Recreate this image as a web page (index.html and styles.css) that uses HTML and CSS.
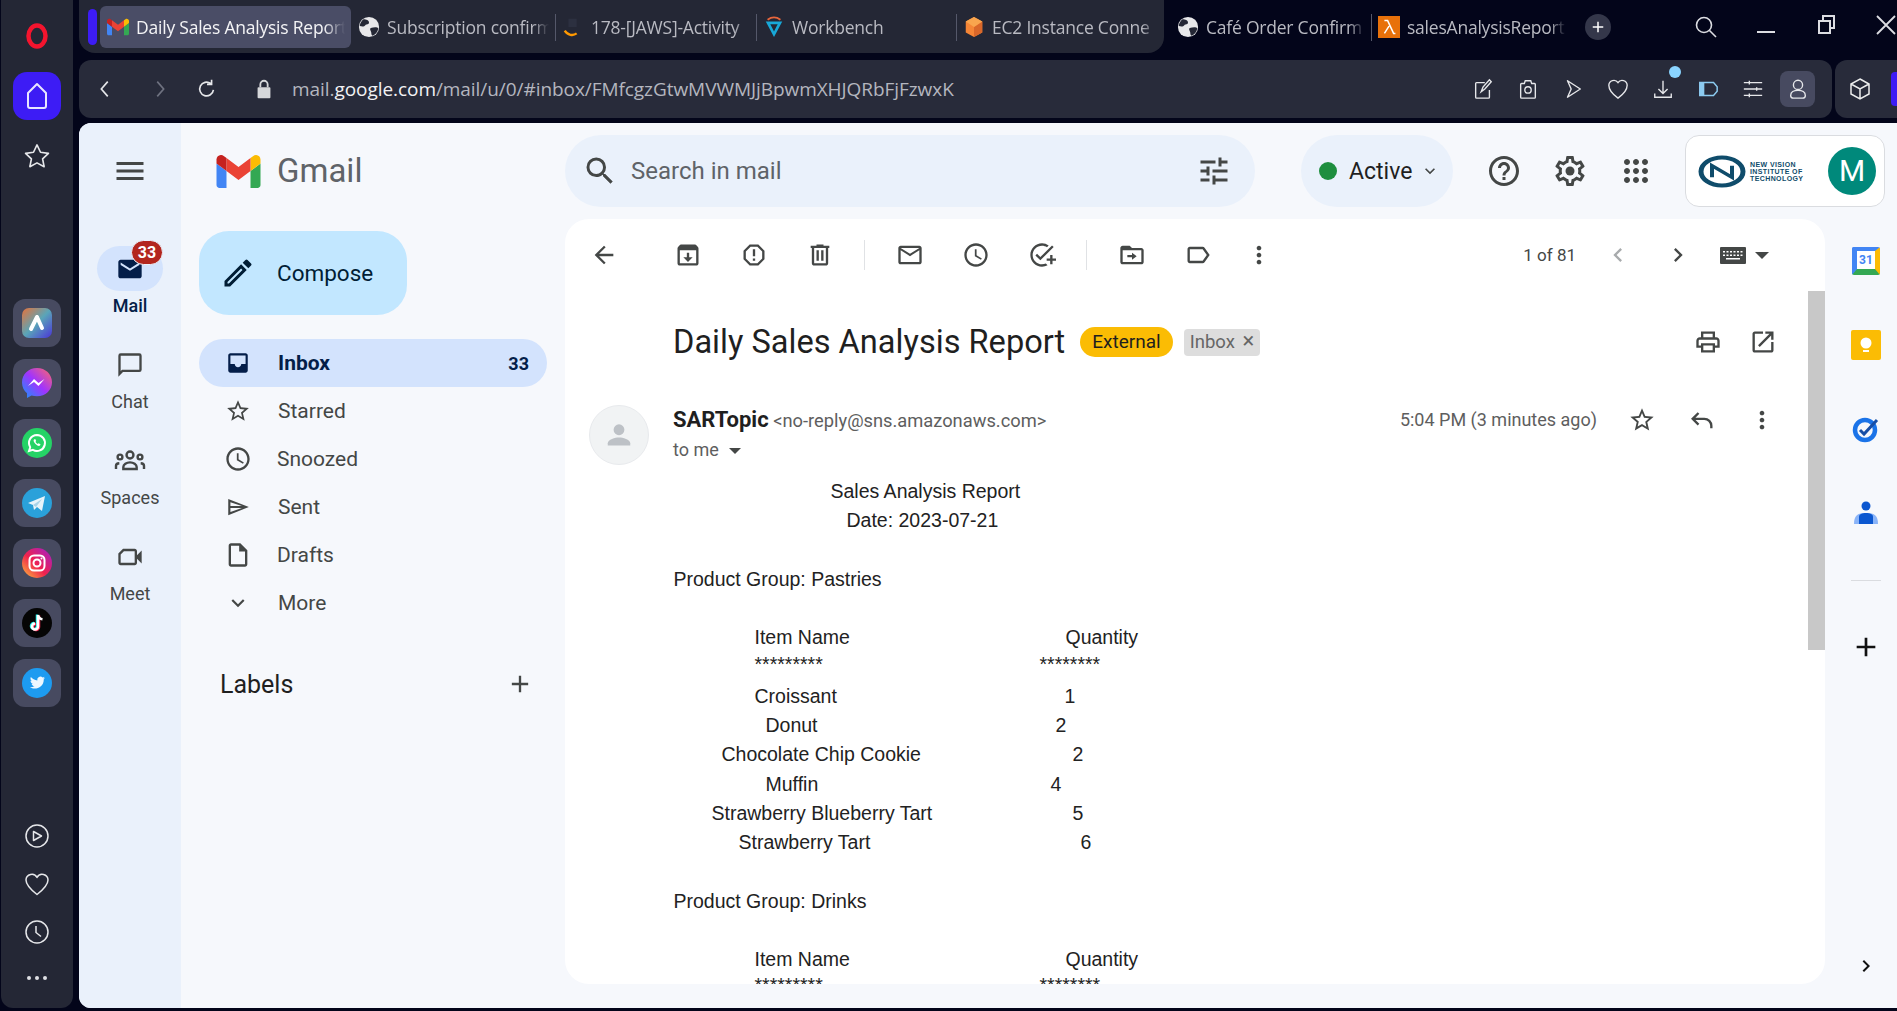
FILE: index.html
```html
<!DOCTYPE html>
<html lang="en">
<head>
    <meta charset="UTF-8">
    <title>Daily Sales Analysis Report - Gmail</title>
    <link rel="stylesheet" href="styles.css">
</head>
<body>
    <!-- icon sprite -->
    <svg class="sprite" xmlns="http://www.w3.org/2000/svg">
        <symbol id="i-menu" viewBox="0 0 24 24"><path d="M3 18h18v-2H3v2zm0-5h18v-2H3v2zm0-7v2h18V6H3z"/></symbol>
        <symbol id="i-search" viewBox="0 0 24 24"><path d="M15.5 14h-.79l-.28-.27A6.471 6.471 0 0 0 16 9.5 6.5 6.5 0 1 0 9.5 16c1.61 0 3.09-.59 4.23-1.57l.27.28v.79l5 4.99L20.49 19l-4.99-5zm-6 0C7.01 14 5 11.99 5 9.5S7.01 5 9.5 5 14 7.01 14 9.5 11.99 14 9.5 14z"/></symbol>
        <symbol id="i-tune" viewBox="0 0 24 24"><path d="M3 17v2h6v-2H3zM3 5v2h10V5H3zm10 16v-2h8v-2h-8v-2h-2v6h2zM7 9v2H3v2h4v2h2V9H7zm14 4v-2H11v2h10zm-6-4h2V7h4V5h-4V3h-2v6z"/></symbol>
        <symbol id="i-help" viewBox="0 0 24 24"><path d="M11 18h2v-2h-2v2zm1-16C6.48 2 2 6.48 2 12s4.48 10 10 10 10-4.48 10-10S17.52 2 12 2zm0 18c-4.41 0-8-3.59-8-8s3.59-8 8-8 8 3.59 8 8-3.59 8-8 8zm0-14c-2.21 0-4 1.79-4 4h2c0-1.1.9-2 2-2s2 .9 2 2c0 2-3 1.75-3 5h2c0-2.25 3-2.5 3-5 0-2.21-1.79-4-4-4z"/></symbol>
        <symbol id="i-gear" viewBox="0 0 24 24"><path d="M19.43 12.98c.04-.32.07-.64.07-.98 0-.34-.03-.66-.07-.98l2.11-1.65c.19-.15.24-.42.12-.64l-2-3.46c-.09-.16-.26-.25-.44-.25-.06 0-.12.01-.17.03l-2.49 1c-.52-.4-1.08-.73-1.69-.98l-.38-2.65C14.46 2.18 14.25 2 14 2h-4c-.25 0-.46.18-.49.42l-.38 2.65c-.61.25-1.17.59-1.69.98l-2.49-1c-.06-.02-.12-.03-.18-.03-.17 0-.34.09-.43.25l-2 3.46c-.13.22-.07.49.12.64l2.11 1.65c-.04.32-.07.65-.07.98 0 .33.03.66.07.98l-2.11 1.65c-.19.15-.24.42-.12.64l2 3.46c.09.16.26.25.44.25.06 0 .12-.01.17-.03l2.49-1c.52.4 1.08.73 1.69.98l.38 2.65c.03.24.24.42.49.42h4c.25 0 .46-.18.49-.42l.38-2.65c.61-.25 1.17-.59 1.69-.98l2.49 1c.06.02.12.03.18.03.17 0 .34-.09.43-.25l2-3.46c.12-.22.07-.49-.12-.64l-2.11-1.65zm-1.98-1.71c.04.31.05.52.05.73 0 .21-.02.43-.05.73l-.14 1.13.89.7 1.08.84-.7 1.21-1.27-.51-1.04-.42-.9.68c-.43.32-.84.56-1.25.73l-1.06.43-.16 1.13-.2 1.35h-1.4l-.19-1.35-.16-1.13-1.06-.43c-.43-.18-.83-.41-1.23-.71l-.91-.7-1.06.43-1.27.51-.7-1.21 1.08-.84.89-.7-.14-1.13c-.03-.31-.05-.54-.05-.74s.02-.43.05-.73l.14-1.13-.89-.7-1.08-.84.7-1.21 1.27.51 1.04.42.9-.68c.43-.32.84-.56 1.25-.73l1.06-.43.16-1.13.2-1.35h1.39l.19 1.35.16 1.13 1.06.43c.43.18.83.41 1.23.71l.91.7 1.06-.43 1.27-.51.7 1.21-1.07.85-.89.7.14 1.13z"/><circle cx="12" cy="12" r="3"/></symbol>
        <symbol id="i-apps" viewBox="0 0 24 24"><path d="M6 8c1.1 0 2-.9 2-2s-.9-2-2-2-2 .9-2 2 .9 2 2 2zm6 12c1.1 0 2-.9 2-2s-.9-2-2-2-2 .9-2 2 .9 2 2 2zm-6 0c1.1 0 2-.9 2-2s-.9-2-2-2-2 .9-2 2 .9 2 2 2zm0-6c1.1 0 2-.9 2-2s-.9-2-2-2-2 .9-2 2 .9 2 2 2zm6 0c1.1 0 2-.9 2-2s-.9-2-2-2-2 .9-2 2 .9 2 2 2zm4-8c0 1.1.9 2 2 2s2-.9 2-2-.9-2-2-2-2 .9-2 2zm-4 2c1.1 0 2-.9 2-2s-.9-2-2-2-2 .9-2 2 .9 2 2 2zm6 6c1.1 0 2-.9 2-2s-.9-2-2-2-2 .9-2 2 .9 2 2 2zm0 6c1.1 0 2-.9 2-2s-.9-2-2-2-2 .9-2 2 .9 2 2 2z"/></symbol>
        <symbol id="i-star" viewBox="0 0 24 24"><path d="M22 9.24l-7.19-.62L12 2 9.19 8.63 2 9.24l5.46 4.73L5.82 21 12 17.27 18.18 21l-1.63-7.03L22 9.24zM12 15.4l-3.76 2.27 1-4.28-3.32-2.88 4.38-.38L12 6.1l1.71 4.04 4.38.38-3.32 2.88 1 4.28L12 15.4z"/></symbol>
        <symbol id="i-clock" viewBox="0 0 24 24"><path d="M11.99 2C6.47 2 2 6.48 2 12s4.47 10 9.99 10C17.52 22 22 17.52 22 12S17.52 2 11.99 2zM12 20c-4.42 0-8-3.58-8-8s3.58-8 8-8 8 3.58 8 8-3.58 8-8 8zm.5-13H11v6l5.25 3.15.75-1.23-4.5-2.67z"/></symbol>
        <symbol id="i-sent" viewBox="0 0 24 24"><path d="M3 4.5v15L22 12 3 4.5zm2 3l10.6 3.5H5V7.5zm0 9V13h10.6L5 16.5z"/></symbol>
        <symbol id="i-draft" viewBox="0 0 24 24"><path d="M14 2H6c-1.1 0-2 .9-2 2v16c0 1.1.9 2 2 2h12c1.1 0 2-.9 2-2V8l-6-6zM6 20V4h7v5h5v11H6z"/></symbol>
        <symbol id="i-down" viewBox="0 0 24 24"><path d="M16.59 8.59L12 13.17 7.41 8.59 6 10l6 6 6-6z"/></symbol>
        <symbol id="i-plus" viewBox="0 0 24 24"><path d="M19 13h-6v6h-2v-6H5v-2h6V5h2v6h6v2z"/></symbol>
        <symbol id="i-inbox" viewBox="0 0 24 24"><path d="M19 3H5c-1.1 0-2 .9-2 2v14c0 1.1.9 2 2 2h14c1.1 0 2-.9 2-2V5c0-1.1-.9-2-2-2zm0 10h-4c0 1.66-1.35 3-3 3s-3-1.34-3-3H5V5h14v8z"/></symbol>
        <symbol id="i-mail-fill" viewBox="0 0 24 24"><path d="M20 4H4c-1.1 0-2 .9-2 2v12c0 1.1.9 2 2 2h16c1.1 0 2-.9 2-2V6c0-1.1-.9-2-2-2zm0 4.5l-8 5-8-5v-2l8 5 8-5v2z"/></symbol>
        <symbol id="i-chat" viewBox="0 0 24 24"><path d="M20 2H4a2 2 0 0 0-2 2v18l4-4h14a2 2 0 0 0 2-2V4a2 2 0 0 0-2-2zm0 14H5.17L4 17.17V4h16v12z"/></symbol>
        <symbol id="i-spaces" viewBox="0 0 24 24"><g fill="none" stroke="currentColor" stroke-width="1.8"><circle cx="12" cy="7.5" r="2.6"/><circle cx="4.5" cy="9" r="1.8"/><circle cx="19.5" cy="9" r="1.8"/><path d="M7 18v-1.500c0-2 2.400-3.500 5-3.500s5 1.500 5 3.500V18z"/><path d="M1.500 18v-2.500c0-1 1-1.700 2.500-1.800M22.500 18v-2.500c0-1-1-1.700-2.500-1.800"/></g></symbol>
        <symbol id="i-meet" viewBox="0 0 24 24"><path d="M18 10.48V7c0-1.1-.9-2-2-2H6L2 9v8c0 1.1.9 2 2 2h12c1.1 0 2-.9 2-2v-3.48l4 3.98v-11l-4 3.98zM16 17H4V9.8L6.8 7H16v10z"/></symbol>
        <symbol id="i-back" viewBox="0 0 24 24"><path d="M20 11H7.83l5.59-5.59L12 4l-8 8 8 8 1.41-1.41L7.83 13H20v-2z"/></symbol>
        <symbol id="i-archive" viewBox="0 0 24 24"><path d="M20.54 5.23l-1.39-1.68C18.88 3.21 18.47 3 18 3H6c-.47 0-.88.21-1.16.55L3.46 5.23C3.17 5.57 3 6.02 3 6.5V19c0 1.1.9 2 2 2h14c1.1 0 2-.9 2-2V6.5c0-.48-.17-.93-.46-1.27zM5 19V8h14v11H5zm8-9h-2v4H8l4 4 4-4h-3v-4z"/></symbol>
        <symbol id="i-report" viewBox="0 0 24 24"><path d="M15.73 3H8.27L3 8.27v7.46L8.27 21h7.46L21 15.73V8.27L15.73 3zM19 14.9L14.9 19H9.1L5 14.9V9.1L9.1 5h5.8L19 9.1v5.8zM11 7h2v6h-2zm0 8h2v2h-2z"/></symbol>
        <symbol id="i-trash" viewBox="0 0 24 24"><path d="M15 4V3H9v1H4v2h1v13c0 1.1.9 2 2 2h10c1.1 0 2-.9 2-2V6h1V4h-5zm2 15H7V6h10v13zM9 8h2v9H9zm4 0h2v9h-2z"/></symbol>
        <symbol id="i-mail" viewBox="0 0 24 24"><path d="M20 4H4c-1.1 0-2 .9-2 2v12c0 1.1.9 2 2 2h16c1.1 0 2-.9 2-2V6c0-1.1-.9-2-2-2zm0 14H4V8l8 5 8-5v10zm-8-7L4 6h16l-8 5z"/></symbol>
        <symbol id="i-task" viewBox="0 0 24 24"><path d="M22 5.18L10.59 16.6l-4.24-4.24 1.41-1.41 2.83 2.83 10-10L22 5.18zM12 20c-4.41 0-8-3.59-8-8s3.59-8 8-8c1.57 0 3.04.46 4.28 1.25l1.45-1.45A9.9 9.9 0 0 0 12 2C6.48 2 2 6.48 2 12s4.48 10 10 10c1.73 0 3.36-.44 4.78-1.22l-1.5-1.5c-1 .46-2.11.72-3.28.72zm7-5h-3v2h3v3h2v-3h3v-2h-3v-3h-2v3z"/></symbol>
        <symbol id="i-move" viewBox="0 0 24 24"><path d="M20 6h-8l-2-2H4c-1.1 0-2 .9-2 2v12c0 1.1.9 2 2 2h16c1.1 0 2-.9 2-2V8c0-1.1-.9-2-2-2zm0 12H4V8h16v10zm-8-2l4-3-4-3v2H8v2h4v2z"/></symbol>
        <symbol id="i-label" viewBox="0 0 24 24"><path d="M17.63 5.84C17.27 5.33 16.67 5 16 5L5 5.01C3.9 5.01 3 5.9 3 7v10c0 1.1.9 1.99 2 1.99L16 19c.67 0 1.27-.33 1.63-.84L22 12l-4.37-6.16zM16 17H5V7h11l3.55 5L16 17z"/></symbol>
        <symbol id="i-more" viewBox="0 0 24 24"><path d="M12 8c1.1 0 2-.9 2-2s-.9-2-2-2-2 .9-2 2 .9 2 2 2zm0 2c-1.1 0-2 .9-2 2s.9 2 2 2 2-.9 2-2-.9-2-2-2zm0 6c-1.1 0-2 .9-2 2s.9 2 2 2 2-.9 2-2-.9-2-2-2z"/></symbol>
        <symbol id="i-left" viewBox="0 0 24 24"><path d="M15.41 7.41L14 6l-6 6 6 6 1.41-1.41L10.83 12z"/></symbol>
        <symbol id="i-right" viewBox="0 0 24 24"><path d="M10 6L8.59 7.41 13.17 12l-4.58 4.59L10 18l6-6z"/></symbol>
        <symbol id="i-keyboard" viewBox="0 0 26 17"><path d="M1 0h24a1 1 0 0 1 1 1v15a1 1 0 0 1-1 1H1a1 1 0 0 1-1-1V1a1 1 0 0 1 1-1zm2 4v1.5h2V4zm3.5 0v1.5h2V4zM10 4v1.5h2V4zm3.5 0v1.5h2V4zM17 4v1.5h2V4zm3.5 0v1.5h2V4zM3 7.5V9h2V7.5zm3.5 0V9h2V7.5zm3.5 0V9h2V7.5zm3.5 0V9h2V7.5zm3.5 0V9h2V7.5zm3.5 0V9h2V7.5zM6 11v1.5h14V11z"/></symbol>
        <symbol id="i-print" viewBox="0 0 24 24"><path d="M19 8h-1V3H6v5H5c-1.66 0-3 1.34-3 3v6h4v4h12v-4h4v-6c0-1.66-1.34-3-3-3zM8 5h8v3H8V5zm8 12v2H8v-4h8v2zm2-2v-2H6v2H4v-4c0-.55.45-1 1-1h14c.55 0 1 .45 1 1v4h-2z"/></symbol>
        <symbol id="i-open" viewBox="0 0 24 24"><path d="M19 19H5V5h7V3H5c-1.11 0-2 .9-2 2v14c0 1.1.89 2 2 2h14c1.1 0 2-.9 2-2v-7h-2v7zM14 3v2h3.59l-9.83 9.83 1.41 1.41L19 6.41V10h2V3h-7z"/></symbol>
        <symbol id="i-reply" viewBox="0 0 24 24"><path d="M9 6l-5 5 5 5M4 11h10a6 6 0 0 1 6 6v2" fill="none" stroke="currentColor" stroke-width="2"/></symbol>
        <symbol id="i-pencil" viewBox="0 0 24 24"><path d="M3 17.25V21h3.75L17.81 9.94l-3.75-3.75L3 17.25zM5.92 19H5v-.92l9.06-9.06.92.92L5.92 19zM20.71 5.63l-2.34-2.34a1 1 0 0 0-1.41 0l-1.83 1.83 3.75 3.75 1.83-1.83a1 1 0 0 0 0-1.41z"/></symbol>
        <symbol id="i-globe" viewBox="0 0 24 24"><circle cx="12" cy="12" r="11" fill="#e8e8ea"/><path d="M6 3.5c3 0 6 1 6 3.5s-3 1.5-4 3-3 2-6 1c0-3 2-6 4-7.5zM14 13c3-1 7-1 8 0 0 4-3 7-6 8.5-2-1-1-3-2-5s-1-3 0-3.500z" fill="#242735"/></symbol>
        <symbol id="i-gmail" viewBox="52 42 88 66">
            <path fill="#4285f4" d="M58 108h14V74L52 59v43c0 3.32 2.69 6 6 6"/>
            <path fill="#34a853" d="M120 108h14c3.32 0 6-2.69 6-6V59l-20 15"/>
            <path fill="#fbbc04" d="M120 48v26l20-15v-8c0-7.42-8.47-11.65-14.4-7.2"/>
            <path fill="#ea4335" d="M72 74V48l24 18 24-18v26L96 92"/>
            <path fill="#c5221f" d="M52 51v8l20 15V48l-5.6-4.2c-5.94-4.45-14.4-.22-14.4 7.2"/>
        </symbol>
        <linearGradient id="g-aria" x1="0" y1="0" x2="1" y2="1"><stop offset="0" stop-color="#e8733a"/><stop offset=".5" stop-color="#5aa5b8"/><stop offset="1" stop-color="#4a35d8"/></linearGradient>
        <linearGradient id="g-msg" x1="0" y1="1" x2="1" y2="0"><stop offset="0" stop-color="#1497fb"/><stop offset=".5" stop-color="#a033ff"/><stop offset="1" stop-color="#ff6968"/></linearGradient>
        <linearGradient id="g-ig" x1="0" y1="1" x2="1" y2="0"><stop offset="0" stop-color="#fdc33b"/><stop offset=".45" stop-color="#f0224d"/><stop offset="1" stop-color="#a01ed0"/></linearGradient>
    </svg>

    <!-- opera sidebar -->
    <aside class="side">
        <svg class="opera" viewBox="0 0 24 28"><ellipse cx="12" cy="14" rx="8.5" ry="10.5" fill="none" stroke="#f4142e" stroke-width="4.5"/></svg>
        <div class="home">
            <svg width="24" height="28" viewBox="0 0 24 28"><path d="M12 2L3 11v13a2 2 0 0 0 2 2h14a2 2 0 0 0 2-2V11z" fill="none" stroke="#e8e6ff" stroke-width="2" stroke-linejoin="round"/></svg>
        </div>
        <svg class="side-star" viewBox="0 0 24 24"><path d="M12 2.5l3 6.3 6.8.9-5 4.7 1.300 6.800-6.100-3.300-6.100 3.300 1.300-6.800-5-4.700 6.800-.9z" fill="none" stroke="#e6e7ea" stroke-width="1.4" stroke-linejoin="round"/></svg>

        <div class="tiles">
            <div class="tile"><svg viewBox="0 0 30 30"><rect width="30" height="30" rx="7" fill="url(#g-aria)"/><path d="M15 9l-6 12M15 9l5 11" stroke="#fff" stroke-width="4" stroke-linecap="round"/></svg></div>
            <div class="tile"><svg viewBox="0 0 30 30"><path d="M15 0C6.5 0 0 6.2 0 14.5 0 19 2 22.8 5 25.3V30l4.5-2.5c1.7.5 3.5.8 5.500.8 8.500 0 15-6.200 15-14C30 6.200 23.500 0 15 0z" fill="url(#g-msg)"/><path d="M6 18l6-7 4.500 4 6-4-6 7-4.500-4z" fill="#fff"/></svg></div>
            <div class="tile"><svg viewBox="0 0 30 30"><circle cx="15" cy="15" r="15" fill="#25d366"/><path d="M15 7a8 8 0 0 0-6.800 12.200L7 23l3.900-1.100A8 8 0 1 0 15 7z" fill="none" stroke="#fff" stroke-width="2"/><path d="M12 11.500c-.8.800-.5 2.500 1.500 4.500s3.700 2.300 4.500 1.500l.5-1.200-2-1-.8.700c-1-.4-1.800-1.200-2.200-2.200l.7-.8-1-2z" fill="#fff"/></svg></div>
            <div class="tile"><svg viewBox="0 0 30 30"><circle cx="15" cy="15" r="15" fill="#2aa1da"/><path d="M6 15l17-7-3 15-5-4-3 3-1-5z" fill="#e8f4fa"/><path d="M11 17l9-6-6 8" fill="#a9d3e8"/></svg></div>
            <div class="tile"><svg viewBox="0 0 30 30"><circle cx="15" cy="15" r="15" fill="url(#g-ig)"/><rect x="7.5" y="7.5" width="15" height="15" rx="4.5" fill="none" stroke="#fff" stroke-width="2"/><circle cx="15" cy="15" r="3.5" fill="none" stroke="#fff" stroke-width="2"/><circle cx="19.5" cy="10.5" r="1" fill="#fff"/></svg></div>
            <div class="tile"><svg viewBox="0 0 30 30"><circle cx="15" cy="15" r="15" fill="#050505"/><path d="M16 7v11.500a3 3 0 1 1-3-3" fill="none" stroke="#25f4ee" stroke-width="2.5" transform="translate(-1 -.5)"/><path d="M16 7v11.500a3 3 0 1 1-3-3" fill="none" stroke="#fe2c55" stroke-width="2.5" transform="translate(1 .5)"/><path d="M16 7v11.500a3 3 0 1 1-3-3M16 7c.5 2.500 2 4 4.500 4.300" fill="none" stroke="#fff" stroke-width="2.5"/></svg></div>
            <div class="tile"><svg viewBox="0 0 30 30"><circle cx="15" cy="15" r="15" fill="#1d9bf0"/><path d="M23 10c-.6.300-1.200.4-1.800.5.700-.4 1.100-1 1.400-1.700-.6.400-1.300.6-2 .8a3.100 3.100 0 0 0-5.300 2.800c-2.600-.1-4.900-1.400-6.400-3.300-.8 1.400-.4 3.200 1 4.100-.5 0-1-.1-1.400-.4 0 1.500 1.100 2.800 2.500 3.100-.5.100-.9.100-1.400 0 .4 1.200 1.500 2.100 2.900 2.100-1.400 1.100-3 1.500-4.600 1.300 5 3.100 13.900.7 13.900-8.100.6-.4 1.100-1 1.500-1.600z" fill="#eef8ff"/></svg></div>
        </div>

        <div class="side-bottom">
            <svg viewBox="0 0 24 24"><circle cx="12" cy="12" r="11" fill="none" stroke="#e6e7ea" stroke-width="1.5"/><path d="M8.500 7.500l8 4.500-8 4.500z" fill="none" stroke="#e6e7ea" stroke-width="1.5" stroke-linejoin="round"/></svg>
            <svg viewBox="0 0 24 24"><path d="M12 22.500C5 17 1 13 1 8a5.800 5.800 0 0 1 11-2.500A5.800 5.800 0 0 1 23 8c0 5-4 9-11 14.500z" fill="none" stroke="#e6e7ea" stroke-width="1.5" stroke-linejoin="round"/></svg>
            <svg viewBox="0 0 24 24"><circle cx="12" cy="12" r="11" fill="none" stroke="#e6e7ea" stroke-width="1.5"/><path d="M11 6v6.500l5 4" fill="none" stroke="#e6e7ea" stroke-width="1.5"/></svg>
            <div class="side-dots"><span></span><span></span><span></span></div>
        </div>
    </aside>

    <div class="main">
        <!-- tabs -->
        <header class="tabbar">
            <div class="tabs-panel">
                <span class="tab-marker"></span>
                <div class="tab tab-active"><svg class="tab-ic" viewBox="0 0 24 24"><use href="#i-gmail"/></svg><span class="tab-title">Daily Sales Analysis Report</span></div>
                <div class="tab tab-sub"><svg class="tab-ic" viewBox="0 0 24 24"><use href="#i-globe"/></svg><span class="tab-title">Subscription confirm</span></div>
                <div class="tab tab-sep"><svg class="tab-ic" viewBox="0 0 24 24"><path d="M3 10c3 5 9 6 13 3" fill="none" stroke="#f90" stroke-width="2.5" transform="translate(0 6)"/><path d="M7 3h9v9H7z" fill="#2c3040"/></svg><span class="tab-title">178-[JAWS]-Activity</span></div>
                <div class="tab tab-sep tab-work"><svg class="tab-ic" viewBox="0 0 24 24"><path d="M3 6h18L12 23z" fill="#18a8d8"/><path d="M8 9h8l-4 8z" fill="#242735"/><path d="M5 4q7-5 14 0" fill="none" stroke="#e8663c" stroke-width="2"/></svg><span class="tab-title">Workbench</span></div>
                <div class="tab tab-sep tab-ec2"><svg class="tab-ic" viewBox="0 0 24 24"><path d="M12 1l9 5v12l-9 5-9-5V6z" fill="#f58536"/><path d="M12 12l9-6v12l-9 5z" fill="#d9672a"/><path d="M12 12L3 6l9-5 9 5z" fill="#f9a54e"/></svg><span class="tab-title">EC2 Instance Conne</span></div>
            </div>
            <div class="tab tab-loose"><svg class="tab-ic" viewBox="0 0 24 24"><use href="#i-globe"/></svg><span class="tab-title">Café Order Confirm</span></div>
            <div class="tab tab-sep"><svg class="tab-ic" viewBox="0 0 24 24"><rect width="24" height="24" fill="#e8710a"/><path d="M7 5h3.500L17 19h2M12 11l-5 8" fill="none" stroke="#fff" stroke-width="1.6"/></svg><span class="tab-title">salesAnalysisReport</span></div>
            <div class="tab-new"><svg width="18" height="18"><use href="#i-plus"/></svg></div>
            <svg class="win-ic win-search" viewBox="0 0 24 24"><circle cx="10" cy="10" r="7.5" fill="none" stroke="currentColor" stroke-width="1.6"/><path d="M15.500 15.500L22 22" stroke="currentColor" stroke-width="1.6"/></svg>
            <svg class="win-ic win-min" viewBox="0 0 24 24"><path d="M3 17h18" stroke="currentColor" stroke-width="2"/></svg>
            <svg class="win-ic win-max" viewBox="0 0 24 24"><path d="M4 6h11v12H4zM8 6V1h11v12h-4" fill="none" stroke="currentColor" stroke-width="2"/></svg>
            <svg class="win-ic win-close" viewBox="0 0 24 24"><path d="M3 1l18 18M21 1L3 19" stroke="currentColor" stroke-width="1.8"/></svg>
        </header>

        <!-- address bar -->
        <div class="addrow">
            <div class="addr">
                <svg class="nav-ic nav-back" viewBox="0 0 24 24"><path d="M15 4l-7 8 7 8" fill="none" stroke="currentColor" stroke-width="1.8"/></svg>
                <svg class="nav-ic nav-fwd" viewBox="0 0 24 24"><path d="M9 4l7 8-7 8" fill="none" stroke="#6f7280" stroke-width="1.8"/></svg>
                <svg class="nav-ic nav-reload" viewBox="0 0 24 24"><path d="M19 13a7.500 7.500 0 1 1-3-7M17 2v5h-5" fill="none" stroke="currentColor" stroke-width="1.8"/></svg>
                <svg class="nav-ic nav-lock" viewBox="0 0 24 24"><path d="M6 10h12a1 1 0 0 1 1 1v10a1 1 0 0 1-1 1H6a1 1 0 0 1-1-1V11a1 1 0 0 1 1-1z" fill="#d6d7da"/><path d="M8 10V7a4 4 0 0 1 8 0v3" fill="none" stroke="#d6d7da" stroke-width="2"/></svg>
                <div class="url">mail.<b>google.com</b>/mail/u/0/#inbox/FMfcgzGtwMVWMJjBpwmXHJQRbFjFzwxK</div>
                <div class="addr-tools">
                    <svg viewBox="0 0 24 24"><path d="M14 5H5a1 1 0 0 0-1 1v15a1 1 0 0 0 1 1h13a1 1 0 0 0 1-1v-8M10 15l2-5 7-8 2 2-7 8z" fill="none" stroke="currentColor" stroke-width="1.5"/></svg>
                    <svg viewBox="0 0 24 24"><path d="M5 6h3l1-3h6l1 3h3a1 1 0 0 1 1 1v14a1 1 0 0 1-1 1H5a1 1 0 0 1-1-1V7a1 1 0 0 1 1-1z" fill="none" stroke="currentColor" stroke-width="1.5"/><circle cx="12" cy="13" r="3.5" fill="none" stroke="currentColor" stroke-width="1.5"/></svg>
                    <svg viewBox="0 0 24 24"><path d="M6 3l14 9-14 9 4-9z" fill="none" stroke="currentColor" stroke-width="1.5" stroke-linejoin="round"/></svg>
                    <svg viewBox="0 0 24 24"><path d="M12 22C5 17 2 13 2 8a5.500 5.500 0 0 1 10-3 5.500 5.500 0 0 1 10 3c0 5-3 9-10 14z" fill="none" stroke="currentColor" stroke-width="1.5"/></svg>
                    <div class="dl"><svg viewBox="0 0 24 24"><path d="M12 3v14M7 12l5 5 5-5M3 17v4h18v-4" fill="none" stroke="currentColor" stroke-width="1.5"/></svg><span class="dl-dot"></span></div>
                    <svg viewBox="0 0 24 24"><path d="M3 5h15l4 4.500v5L18 19H3z" fill="none" stroke="#8ccbf0" stroke-width="1.6"/><path d="M3 5h5v14H3z" fill="#8ccbf0"/></svg>
                    <svg viewBox="0 0 24 24"><path d="M2 5h20M2 12h20M2 19h20" fill="none" stroke="currentColor" stroke-width="1.5"/><path d="M8 3v4M16 10v4M8 17v4" stroke="currentColor" stroke-width="1.5"/></svg>
                    <div class="profile"><svg viewBox="0 0 24 24"><circle cx="12" cy="7.500" r="5" fill="none" stroke="currentColor" stroke-width="1.5"/><path d="M4 19c0-3.500 3.500-5.500 8-5.500s8 2 8 5.500c0 2-1.500 3-3 3H7c-1.500 0-3-1-3-3z" fill="none" stroke="currentColor" stroke-width="1.5"/></svg></div>
                </div>
            </div>
            <div class="ext">
                <svg viewBox="0 0 24 24"><path d="M12 2l9 5v10l-9 5-9-5V7zM3 7l9 5 9-5M12 12v10" fill="none" stroke="#eceded" stroke-width="1.5"/></svg>
                <span class="ext-purple"></span>
            </div>
        </div>

        <!-- gmail page -->
        <div class="page">
            <nav class="rail">
                <div class="rail-top"><svg class="ic-24 ic-menu"><use href="#i-menu"/></svg></div>
                <div class="rail-item rail-active">
                    <div class="rail-pill">
                        <svg class="ic-28"><use href="#i-mail-fill"/></svg>
                        <span class="rail-badge">33</span>
                    </div>
                    <div class="rail-label">Mail</div>
                </div>
                <div class="rail-item">
                    <div class="rail-pill"><svg class="ic-28"><use href="#i-chat"/></svg></div>
                    <div class="rail-label">Chat</div>
                </div>
                <div class="rail-item">
                    <div class="rail-pill"><svg class="ic-32"><use href="#i-spaces"/></svg></div>
                    <div class="rail-label">Spaces</div>
                </div>
                <div class="rail-item">
                    <div class="rail-pill"><svg class="ic-28"><use href="#i-meet"/></svg></div>
                    <div class="rail-label">Meet</div>
                </div>
            </nav>

            <section class="folders">
                <div class="brand">
                    <svg class="brand-logo"><use href="#i-gmail"/></svg>
                    <span class="brand-name">Gmail</span>
                </div>
                <button class="compose"><svg class="ic-36"><use href="#i-pencil"/></svg><span>Compose</span></button>
                <ul class="folder-list">
                    <li class="folder folder-on"><svg class="ic-26"><use href="#i-inbox"/></svg><span>Inbox</span><em>33</em></li>
                    <li class="folder"><svg class="ic-26"><use href="#i-star"/></svg><span>Starred</span></li>
                    <li class="folder"><svg class="ic-28"><use href="#i-clock"/></svg><span>Snoozed</span></li>
                    <li class="folder"><svg class="ic-26"><use href="#i-sent"/></svg><span>Sent</span></li>
                    <li class="folder"><svg class="ic-28"><use href="#i-draft"/></svg><span>Drafts</span></li>
                    <li class="folder"><svg class="ic-26"><use href="#i-down"/></svg><span>More</span></li>
                </ul>
                <div class="labels"><span>Labels</span><svg class="ic-28"><use href="#i-plus"/></svg></div>
            </section>

            <div class="work">
                <header class="topbar">
                    <div class="search">
                        <svg class="ic-36"><use href="#i-search"/></svg>
                        <span class="search-text">Search in mail</span>
                        <svg class="ic-36 search-tune"><use href="#i-tune"/></svg>
                    </div>
                    <div class="status"><span class="status-dot"></span><span>Active</span><svg class="ic-20"><use href="#i-down"/></svg></div>
                    <svg class="ic-36 top-help"><use href="#i-help"/></svg>
                    <svg class="ic-36 top-gear"><use href="#i-gear"/></svg>
                    <svg class="ic-36 top-apps"><use href="#i-apps"/></svg>
                    <div class="account">
                        <div class="org">
                            <svg class="org-mark" viewBox="0 0 48 40" preserveAspectRatio="none"><ellipse cx="24" cy="20" rx="21" ry="17" fill="none" stroke="#0f4c6b" stroke-width="5"/><path d="M10 20h28" stroke="#fff" stroke-width="4"/><path d="M14 27V13l20 14V13" fill="none" stroke="#0f4c6b" stroke-width="4"/></svg>
                            <div class="org-name">NEW VISION<br>INSTITUTE OF<br>TECHNOLOGY</div>
                        </div>
                        <div class="avatar-m">M</div>
                    </div>
                </header>

                <div class="work-row">
                    <main class="panel">
                        <div class="toolbar">
                            <span class="tb tb-back"><svg class="ic-28"><use href="#i-back"/></svg></span>
                            <span class="tb"><svg class="ic-28"><use href="#i-archive"/></svg></span>
                            <span class="tb"><svg class="ic-28"><use href="#i-report"/></svg></span>
                            <span class="tb"><svg class="ic-28"><use href="#i-trash"/></svg></span>
                            <span class="tb-sep"></span>
                            <span class="tb"><svg class="ic-28"><use href="#i-mail"/></svg></span>
                            <span class="tb"><svg class="ic-28"><use href="#i-clock"/></svg></span>
                            <span class="tb"><svg class="ic-28"><use href="#i-task"/></svg></span>
                            <span class="tb-sep"></span>
                            <span class="tb"><svg class="ic-28"><use href="#i-move"/></svg></span>
                            <span class="tb"><svg class="ic-28"><use href="#i-label"/></svg></span>
                            <span class="tb tb-more"><svg class="ic-28"><use href="#i-more"/></svg></span>
                            <div class="pager">
                                <span class="pager-text">1 of 81</span>
                                <span class="pager-btn pager-off"><svg class="ic-28"><use href="#i-left"/></svg></span>
                                <span class="pager-btn"><svg class="ic-28"><use href="#i-right"/></svg></span>
                                <svg class="kbd"><use href="#i-keyboard"/></svg>
                                <span class="caret"></span>
                            </div>
                        </div>

                        <div class="panel-body">
                            <article class="msg">
                                <div class="subject">
                                    <h2>Daily Sales Analysis Report</h2>
                                    <span class="tag-ext">External</span>
                                    <span class="tag-inbox">Inbox <i>×</i></span>
                                    <div class="subject-tools">
                                        <svg class="ic-28"><use href="#i-print"/></svg>
                                        <svg class="ic-28"><use href="#i-open"/></svg>
                                    </div>
                                </div>
                                <div class="sender">
                                    <div class="sender-pic"><svg viewBox="0 0 24 24" width="36" height="36"><circle cx="12" cy="8.5" r="3.6" fill="#bdc1c6"/><path d="M4.500 19v-1.500c0-2.500 5-3.800 7.500-3.800s7.500 1.300 7.500 3.800V19z" fill="#bdc1c6"/></svg></div>
                                    <div class="sender-info">
                                        <div class="sender-line"><b>SARTopic</b> <span>&lt;no-reply@sns.amazonaws.com&gt;</span></div>
                                        <div class="sender-to">to me <span class="caret caret-sm"></span></div>
                                    </div>
                                    <div class="sender-date">5:04 PM (3 minutes ago)</div>
                                    <span class="sender-btn"><svg class="ic-28"><use href="#i-star"/></svg></span>
                                    <span class="sender-btn"><svg class="ic-28"><use href="#i-reply"/></svg></span>
                                    <span class="sender-btn"><svg class="ic-28"><use href="#i-more"/></svg></span>
                                </div>

                                <div class="report">
                                    <div class="ind-157">Sales Analysis Report</div>
                                    <div class="ind-173">Date: 2023-07-21</div>
                                    <br>
                                    <div>Product Group: Pastries</div>
                                    <br>
                                    <div class="line"><span class="ind-81">Item Name</span><span class="ind-26">Quantity</span></div>
                                    <div class="line line-stars"><span class="ind-81">*********</span><span>********</span></div>
                                    <div class="line"><span class="ind-81">Croissant</span><span class="ind-25">1</span></div>
                                    <div class="line"><span class="ind-92">Donut</span><span class="ind-16">2</span></div>
                                    <div class="line"><span class="ind-48">Chocolate Chip Cookie</span><span class="ind-33">2</span></div>
                                    <div class="line"><span class="ind-92">Muffin</span><span class="ind-11">4</span></div>
                                    <div class="line"><span class="ind-38">Strawberry Blueberry Tart</span><span class="ind-33">5</span></div>
                                    <div class="line"><span class="ind-65">Strawberry Tart</span><span class="ind-41">6</span></div>
                                    <br>
                                    <div>Product Group: Drinks</div>
                                    <br>
                                    <div class="line"><span class="ind-81">Item Name</span><span class="ind-26">Quantity</span></div>
                                    <div class="line line-stars"><span class="ind-81">*********</span><span>********</span></div>
                                </div>
                            </article>
                            <div class="scroll"><div class="scroll-thumb"></div></div>
                        </div>
                    </main>

                    <aside class="addons">
                        <div class="addon">
                            <div class="cal"><span>31</span></div>
                        </div>
                        <div class="addon">
                            <svg width="30" height="30" viewBox="0 0 30 30"><rect width="30" height="30" rx="2" fill="#fbbc04"/><circle cx="15" cy="13" r="5.5" fill="#fff"/><rect x="12" y="20" width="6" height="2" fill="#fff"/></svg>
                        </div>
                        <div class="addon">
                            <svg width="28" height="28" viewBox="0 0 28 28"><circle cx="13" cy="15" r="10" fill="none" stroke="#1a73e8" stroke-width="4.5"/><path d="M8 15l4 4 13-14" fill="none" stroke="#174ea6" stroke-width="3"/></svg>
                        </div>
                        <div class="addon">
                            <svg width="26" height="26" viewBox="0 0 26 26"><circle cx="13" cy="6" r="4.5" fill="#0b57d0"/><path d="M1 24c0-8 3-11 12-11s12 3 12 11z" fill="#8ab4f8"/><path d="M6 24v-7c0-3 3-4 7-4s7 1 7 4v7z" fill="#0b57d0"/></svg>
                        </div>
                        <div class="addon-sep"></div>
                        <div class="addon addon-plus"><svg class="ic-32"><use href="#i-plus"/></svg></div>
                        <div class="addon-end"><svg class="ic-24"><use href="#i-right"/></svg></div>
                    </aside>
                </div>
            </div>
        </div>
    </div>
</body>
</html>
```

FILE: styles.css
```css
* { margin: 0; padding: 0; box-sizing: border-box; }
html, body { height: 100%; }
body {
    display: flex;
    width: 1897px;
    height: 1011px;
    overflow: hidden;
    background-color: #03051a;
    font-family: Roboto, "Noto Sans", sans-serif;
}
svg { display: block; flex-shrink: 0; fill: currentColor; }
ul { list-style: none; }
.sprite { position: absolute; width: 0; height: 0; }

/* icon sizes */
.ic-20 { width: 20px; height: 20px; }
.ic-24 { width: 24px; height: 24px; }
.ic-26 { width: 26px; height: 26px; }
.ic-28 { width: 28px; height: 28px; }
.ic-32 { width: 32px; height: 32px; }
.ic-36 { width: 36px; height: 36px; }

/* opera sidebar */
.side {
    display: flex;
    flex-direction: column;
    align-items: center;
    flex-shrink: 0;
    width: 72px;
    height: 1008px;
    margin-left: 1px;
    padding-top: 22px;
    background-color: #242735;
    border-radius: 0 0 12px 12px;
}
.opera { width: 24px; height: 28px; }
.home {
    display: flex;
    align-items: center;
    justify-content: center;
    width: 48px;
    height: 48px;
    margin-top: 22px;
    background-color: #3d1cf5;
    border-radius: 14px;
}
.side-star { width: 28px; height: 28px; margin-top: 22px; }
.tiles {
    display: flex;
    flex-direction: column;
    gap: 12px;
    margin-top: 129px;
}
.tile {
    display: flex;
    align-items: center;
    justify-content: center;
    width: 48px;
    height: 48px;
    background-color: #474a60;
    border-radius: 12px;
}
.tile svg { width: 30px; height: 30px; }
.side-bottom {
    display: flex;
    flex-direction: column;
    align-items: center;
    gap: 24px;
    margin-top: auto;
    padding-bottom: 28px;
}
.side-bottom svg { width: 24px; height: 24px; }
.side-dots { display: flex; gap: 4px; padding-top: 8px; }
.side-dots span { width: 4px; height: 4px; background-color: #dfe0e4; border-radius: 50%; }

.main {
    display: flex;
    flex-direction: column;
    flex: 1;
    min-width: 0;
    margin-left: 6px;
}

/* tabs */
.tabbar {
    display: flex;
    align-items: flex-start;
    height: 60px;
    color: #b9bac2;
}
.tabs-panel {
    display: flex;
    align-items: center;
    flex-shrink: 0;
    width: 1085px;
    height: 53px;
    padding-left: 9px;
    padding-top: 1px;
    background-color: #242735;
    border-radius: 0 0 16px 16px;
}
.tab-marker {
    width: 9px;
    height: 36px;
    margin-right: 3px;
    background-color: #3d1cf5;
    border-radius: 5px;
}
.tab {
    display: flex;
    align-items: center;
    flex-shrink: 0;
    gap: 7px;
    width: 201px;
    height: 42px;
    padding-left: 7px;
    padding-right: 6px;
    font-family: "Open Sans", "Noto Sans", sans-serif;
    font-size: 17.5px;
    letter-spacing: -0.22px;
    white-space: nowrap;
}
.tab-active {
    width: 251px;
    background-color: #4a4d66;
    border-radius: 6px;
    color: #f4f4f6;
}
.tab-sub { width: 204px; }
.tab-work { width: 200px; }
.tab-ec2 { width: 208px; }
.tab-sep { position: relative; }
.tab-sep::before {
    content: "";
    position: absolute;
    left: 0;
    top: 8px;
    bottom: 7px;
    width: 1px;
    background-color: #55586a;
}
.tab-loose { margin-top: 6px; margin-left: 6px; }
.tabbar > .tab-sep { margin-top: 6px; }
.tab-ic { width: 22px; height: 22px; }
.tab-title {
    flex: 1;
    min-width: 0;
    overflow: hidden;
    -webkit-mask-image: linear-gradient(to right, #000 90%, transparent);
    mask-image: linear-gradient(to right, #000 90%, transparent);
}
.tab-new {
    display: flex;
    align-items: center;
    justify-content: center;
    flex-shrink: 0;
    width: 26px;
    height: 26px;
    margin: 14px 0 0 13px;
    background-color: #34374a;
    border-radius: 50%;
    color: #fff;
}
.win-ic { width: 24px; height: 24px; margin-top: 15px; color: #dcdde2; }
.win-search { margin-left: 83px; }
.win-min { margin-left: 36px; }
.win-max { margin-left: 37px; }
.win-close { margin-left: 35px; }

/* address bar */
.addrow { display: flex; height: 58px; margin-bottom: 5px; }
.addr {
    display: flex;
    align-items: center;
    flex-shrink: 0;
    width: 1753px;
    background-color: #282b3a;
    border-radius: 12px;
    color: #e6e7ea;
}
.nav-ic { width: 22px; height: 22px; }
.nav-back { margin-left: 15px; }
.nav-fwd { margin-left: 33px; }
.nav-reload { margin-left: 25px; }
.nav-lock { margin-left: 35px; }
.url {
    margin-left: 17px;
    font-family: "Open Sans", "Noto Sans", sans-serif;
    font-size: 19px;
    letter-spacing: -0.06px;
    color: #b4b6bf;
    white-space: nowrap;
}
.url b { font-weight: 400; color: #f2f2f4; }
.addr-tools {
    display: flex;
    align-items: center;
    gap: 23px;
    margin-left: auto;
    margin-right: 17px;
}
.addr-tools svg { width: 22px; height: 22px; }
.dl { position: relative; }
.dl-dot {
    position: absolute;
    top: -12px;
    right: -7px;
    width: 12px;
    height: 12px;
    background-color: #8ad4ff;
    border-radius: 50%;
}
.profile {
    display: flex;
    align-items: center;
    justify-content: center;
    width: 35px;
    height: 36px;
    margin-left: -7px;
    background-color: #474a60;
    border-radius: 8px;
}
.ext {
    display: flex;
    align-items: center;
    flex: 1;
    min-width: 0;
    margin-left: 3px;
    padding-left: 13px;
    overflow: hidden;
    background-color: #282b3a;
    border-radius: 12px 0 0 12px;
}
.ext svg { width: 24px; height: 24px; }
.ext-purple {
    flex-shrink: 0;
    width: 8px;
    height: 34px;
    margin-left: 19px;
    background-color: #3d1cf5;
    border-radius: 4px 0 0 4px;
}

/* gmail page */
.page {
    display: flex;
    flex: 1;
    height: 885px;
    margin-bottom: 3px;
    background-color: #f6f8fc;
    border-radius: 12px 0 0 12px;
    overflow: hidden;
}
.rail {
    display: flex;
    flex-direction: column;
    align-items: center;
    flex-shrink: 0;
    width: 102px;
    background-color: #eaf1fb;
}
.rail-top {
    display: flex;
    align-items: center;
    justify-content: center;
    height: 96px;
    margin-bottom: 27px;
    color: #444746;
}
.ic-menu { width: 36px; height: 36px; }
.rail-item {
    display: flex;
    flex-direction: column;
    align-items: center;
    height: 96px;
    color: #444746;
}
.rail-pill {
    position: relative;
    display: flex;
    align-items: center;
    justify-content: center;
    width: 66px;
    height: 45px;
    border-radius: 23px;
}
.rail-active .rail-pill { background-color: #d3e3fd; color: #041e49; }
.rail-badge {
    position: absolute;
    top: -6px;
    right: 0;
    min-width: 32px;
    height: 25px;
    padding: 0 4px;
    border: 1px solid #eaf1fb;
    background-color: #b3261e;
    border-radius: 13px;
    color: #fff;
    font-size: 16px;
    font-weight: 700;
    line-height: 23px;
    text-align: center;
}
.rail-label { margin-top: 4px; font-size: 18px; line-height: 22px; }
.rail-active .rail-label { color: #041e49; font-weight: 500; }

.folders { width: 384px; flex-shrink: 0; }
.brand {
    display: flex;
    align-items: center;
    gap: 16px;
    height: 96px;
    padding-left: 35px;
}
.brand-logo { width: 45px; height: 33px; }
.brand-name { color: #5f6368; font-size: 33px; line-height: 40px; }
.compose {
    display: flex;
    align-items: center;
    gap: 21px;
    width: 208px;
    height: 84px;
    margin: 12px 0 0 18px;
    padding-left: 21px;
    border: none;
    background-color: #c2e7ff;
    border-radius: 30px;
    color: #001d35;
    font-family: inherit;
    font-size: 22.5px;
    font-weight: 400;
}
.folder-list { margin-top: 24px; }
.folder {
    display: flex;
    align-items: center;
    width: 348px;
    height: 48px;
    margin-left: 18px;
    color: #444746;
    font-size: 21px;
    border-radius: 24px;
}
.folder svg { margin-left: 26px; }
.folder .ic-28 { margin-left: 25px; margin-right: -2px; }
.folder span { margin-left: 27px; }
.folder-on { background-color: #d3e3fd; color: #041e49; font-weight: 700; }
.folder em { margin-left: auto; margin-right: 18px; font-size: 18px; font-style: normal; }
.labels {
    display: flex;
    align-items: center;
    justify-content: space-between;
    height: 48px;
    margin-top: 33px;
    padding: 0 31px 0 39px;
    color: #1f1f1f;
    font-size: 25px;
}
.labels svg { color: #444746; }

/* top bar */
.work { display: flex; flex-direction: column; flex: 1; min-width: 0; }
.topbar {
    display: flex;
    align-items: center;
    height: 96px;
    padding-top: 12px;
    padding-bottom: 12px;
    color: #444746;
}
.search {
    display: flex;
    align-items: center;
    flex-shrink: 0;
    width: 690px;
    height: 72px;
    padding: 0 23px 0 17px;
    background-color: #eaf1fb;
    border-radius: 36px;
}
.search-text { margin-left: 13px; color: #5f6368; font-size: 24px; }
.search-tune { margin-left: auto; }
.status {
    display: flex;
    align-items: center;
    flex-shrink: 0;
    width: 152px;
    height: 72px;
    margin-left: 46px;
    padding-left: 18px;
    background-color: #eaf1fb;
    border-radius: 36px;
    color: #1f1f1f;
    font-size: 23px;
}
.status-dot { width: 18px; height: 18px; margin-right: 12px; background-color: #1e8e3e; border-radius: 50%; }
.status svg { margin-left: 8px; color: #444746; }
.top-help { margin-left: 33px; }
.top-gear { margin-left: 30px; }
.top-apps { margin-left: 30px; }
.account {
    display: flex;
    align-items: center;
    justify-content: space-between;
    flex-shrink: 0;
    width: 200px;
    height: 72px;
    margin-left: 31px;
    padding: 0 8px 0 12px;
    background-color: #fff;
    border: 1px solid #dadce0;
    border-radius: 14px;
}
.org { display: flex; align-items: center; gap: 4px; }
.org-mark { width: 48px; height: 33px; }
.org-name {
    color: #0f4c6b;
    font-family: "Liberation Sans", sans-serif;
    font-size: 7px;
    font-weight: 700;
    letter-spacing: 0.4px;
    line-height: 7px;
    white-space: nowrap;
}
.avatar-m {
    width: 48px;
    height: 48px;
    background-color: #00897b;
    border-radius: 50%;
    color: #fff;
    font-size: 30px;
    line-height: 48px;
    text-align: center;
}

/* message panel */
.work-row { display: flex; flex: 1; min-height: 0; }
.panel {
    display: flex;
    flex-direction: column;
    flex-shrink: 0;
    width: 1260px;
    height: 765px;
    background-color: #fff;
    border-radius: 24px;
    overflow: hidden;
}
.toolbar {
    display: flex;
    align-items: center;
    height: 72px;
    padding-left: 6px;
    padding-right: 50px;
    color: #444746;
}
.tb { display: flex; justify-content: center; width: 66px; }
.tb-back { margin-right: 18px; }
.tb-more { width: 56px; }
.tb-sep { width: 1px; height: 30px; margin: 0 12px 0 11px; background-color: #e0e2e5; }
.pager { display: flex; align-items: center; margin-left: auto; }
.pager-text { margin-right: 12px; font-size: 17px; }
.pager-btn { display: flex; justify-content: center; width: 60px; }
.pager-off { color: #a8abad; }
.kbd { width: 26px; height: 17px; margin: 0 3px 0 12px; color: #444746; }
.caret {
    width: 0;
    height: 0;
    margin: 0 6px;
    border-left: 7px solid transparent;
    border-right: 7px solid transparent;
    border-top: 7px solid #444746;
}
.caret-sm {
    display: inline-block;
    margin: 0 0 2px 6px;
    border-left-width: 6px;
    border-right-width: 6px;
    border-top-width: 6px;
}

.panel-body { display: flex; flex: 1; min-height: 0; }
.msg { flex: 1; min-width: 0; overflow: hidden; }
.scroll { width: 17px; }
.scroll-thumb { height: 359px; background-color: #c8c8c8; }

.subject {
    display: flex;
    align-items: center;
    height: 102px;
    padding-left: 108px;
    padding-right: 17px;
    color: #1f1f1f;
}
.subject h2 { font-size: 32.6px; font-weight: 400; white-space: nowrap; }
.tag-ext {
    height: 30px;
    margin-left: 15px;
    padding: 0 12px;
    background-color: #fbbc04;
    border-radius: 15px;
    font-size: 19px;
    line-height: 30px;
}
.tag-inbox {
    height: 27px;
    margin-left: 11px;
    padding: 0 6px;
    background-color: #ddd;
    border-radius: 4px;
    color: #666;
    font-size: 18.5px;
    line-height: 27px;
}
.tag-inbox i { margin-left: 3px; font-size: 22px; font-style: normal; line-height: 20px; }
.subject-tools { display: flex; gap: 27px; margin-left: auto; padding-right: 14px; color: #444746; }

.sender {
    display: flex;
    align-items: flex-start;
    height: 84px;
    padding-left: 24px;
    padding-top: 12px;
    padding-right: 16px;
}
.sender-pic {
    display: flex;
    align-items: center;
    justify-content: center;
    width: 60px;
    height: 60px;
    background-color: #f1f3f4;
    border: 1px solid #e8eaed;
    border-radius: 50%;
}
.sender-info { margin-left: 24px; }
.sender-line { height: 30px; color: #5e5e5e; font-size: 18.3px; line-height: 30px; white-space: nowrap; }
.sender-line b { color: #1f1f1f; font-size: 22px; font-weight: 700; }
.sender-to { color: #5e5e5e; font-size: 18px; line-height: 30px; }
.sender-date { margin-left: auto; margin-right: 15px; color: #5e5e5e; font-size: 18px; line-height: 30px; }
.sender-btn { display: flex; justify-content: center; width: 60px; height: 30px; align-items: center; color: #444746; }

/* plain text report, spaces in the mail body kept as offsets */
.report {
    margin-left: 108.5px;
    color: #222;
    font-family: "Liberation Sans", Arial, sans-serif;
    font-size: 19.5px;
    line-height: 29.25px;
}
.line { display: grid; grid-template-columns: 366px 1fr; white-space: nowrap; }
.line-stars { margin-top: -3px; margin-bottom: 3px; }
.ind-11 { padding-left: 11px; }
.ind-16 { padding-left: 16px; }
.ind-25 { padding-left: 25px; }
.ind-26 { padding-left: 26px; }
.ind-33 { padding-left: 33px; }
.ind-38 { padding-left: 38px; }
.ind-41 { padding-left: 41px; }
.ind-48 { padding-left: 48px; }
.ind-65 { padding-left: 65px; }
.ind-81 { padding-left: 81px; }
.ind-92 { padding-left: 92px; }
.ind-157 { padding-left: 157px; }
.ind-173 { padding-left: 173px; }

/* add-ons column */
.addons {
    display: flex;
    flex-direction: column;
    align-items: center;
    flex: 1;
    padding-left: 10px;
}
.addon { display: flex; align-items: center; justify-content: center; height: 84px; flex-shrink: 0; }
.cal {
    width: 28px;
    height: 28px;
    border-style: solid;
    border-width: 4px 5px 6px 5px;
    border-color: #4285f4 #fbbc04 #34a853 #4285f4;
    border-radius: 2px;
    background-color: #fff;
    color: #4285f4;
    font-size: 12px;
    font-weight: 700;
    line-height: 18px;
    text-align: center;
}
.addon-sep { width: 30px; height: 1px; margin-top: 25px; background-color: #dadce0; }
.addon-plus { height: 60px; margin-top: 36px; color: #111; }
.addon-end { margin-top: auto; padding-bottom: 30px; color: #111; }
```
